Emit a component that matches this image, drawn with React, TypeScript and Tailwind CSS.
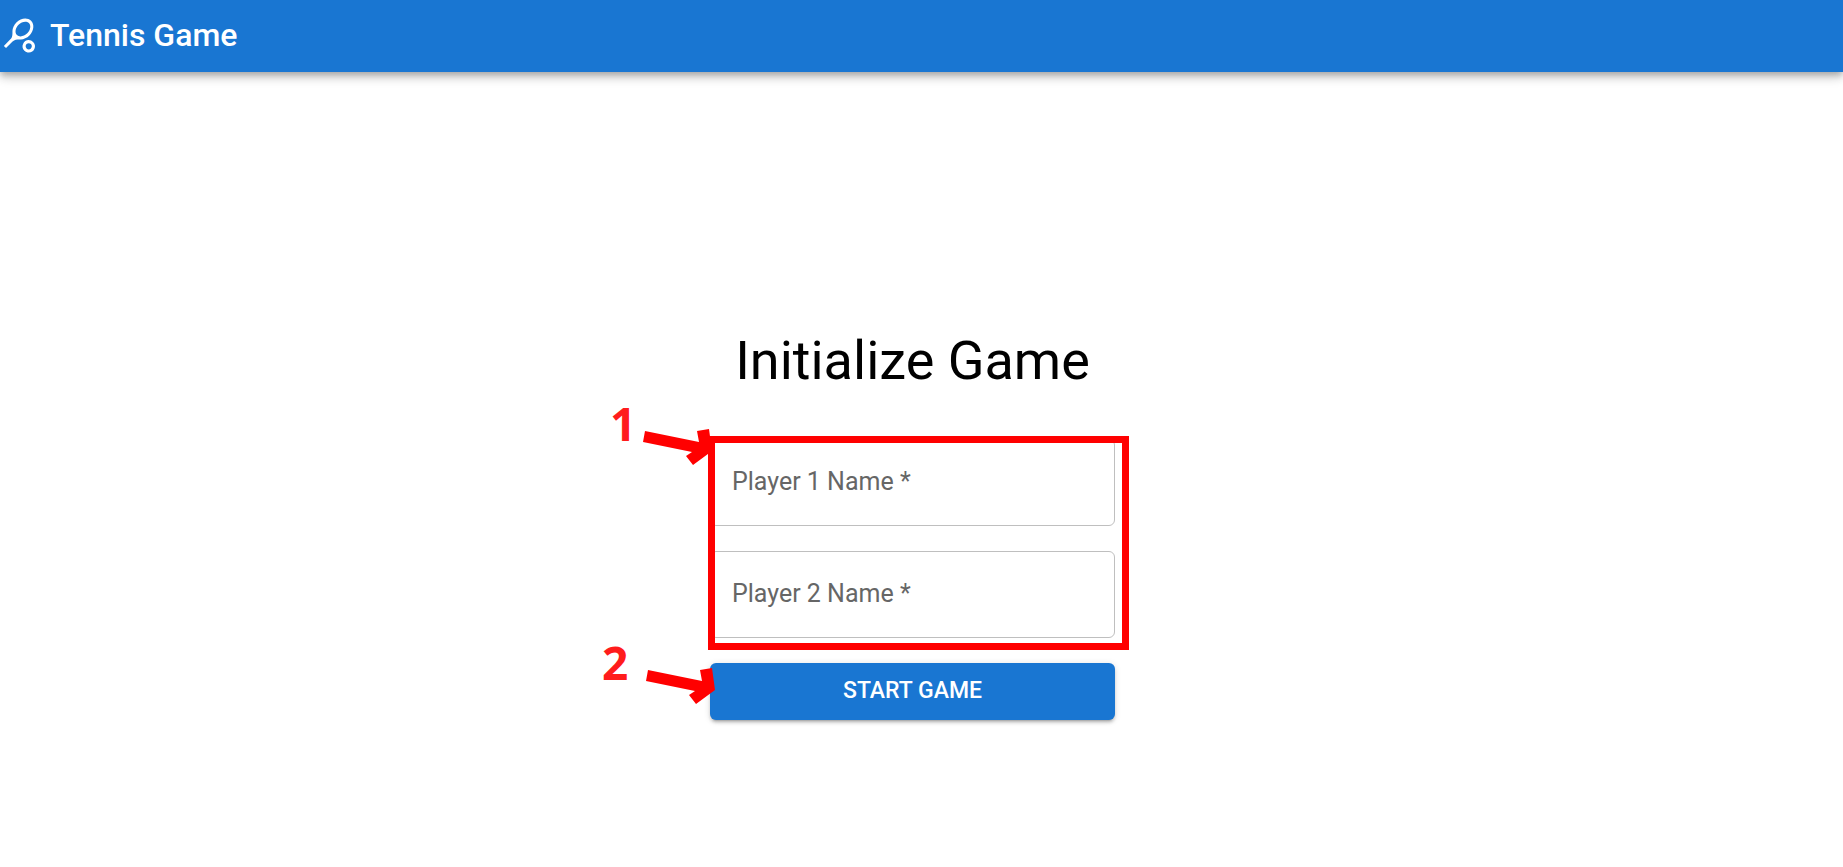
import { MdOutlineSportsTennis } from "react-icons/md";

function Arrow({ className }: { className: string }) {
  return (
    <svg
      className={`pointer-events-none absolute h-10 w-[72px] ${className}`}
      viewBox="0 0 72 40"
      fill="#ff0000"
      aria-hidden="true"
    >
      <polygon points="3,3 57,14 55,3 67,1 70,23 51,37 44,28 50,24 1,14" />
    </svg>
  );
}

function Step({ value, className }: { value: string; className: string }) {
  return (
    <span
      className={`pointer-events-none absolute font-['Open_Sans',sans-serif] text-[46px] leading-none font-bold text-[#ff1c1c] ${className}`}
    >
      {value}
    </span>
  );
}

function PlayerField({ id, label }: { id: string; label: string }) {
  return (
    <div className="relative">
      <input
        id={id}
        type="text"
        required
        className="peer block h-[87px] w-full rounded-md border border-[#bfbfbf] bg-white px-[22px] text-[25px] text-black outline-none focus:border-[#1976d2]"
      />
      <label
        htmlFor={id}
        className="pointer-events-none absolute inset-y-0 left-[22px] flex items-center pb-[2px] text-[25px] leading-9 whitespace-pre text-[#666666] peer-valid:hidden peer-focus:hidden"
      >
        {label} *
      </label>
    </div>
  );
}

export default function App() {
  return (
    <div className="min-h-screen bg-white font-[Roboto,sans-serif] text-black">
      <header className="flex h-[72px] items-center gap-3 bg-[#1976d2] pb-[2px] pl-px text-white shadow-[0_3px_6px_-1px_rgba(0,0,0,0.2),0_6px_8px_0_rgba(0,0,0,0.14),0_2px_15px_0_rgba(0,0,0,0.12)]">
        <MdOutlineSportsTennis className="size-[37px]" aria-hidden="true" />
        <span className="text-[32px] leading-[50px] font-medium">Tennis Game</span>
      </header>

      <main className="flex flex-col items-center pt-64 pr-[18px]">
        <h1 className="text-[54px] leading-[66px]">Initialize Game</h1>

        <form
          className="mt-[45px] flex w-[405px] flex-col gap-[25px]"
          onSubmit={(event) => event.preventDefault()}
        >
          <div className="relative flex flex-col gap-[25px]">
            <PlayerField id="player-one" label="Player 1 Name" />
            <PlayerField id="player-two" label="Player 2 Name" />
            <div className="pointer-events-none absolute -top-[3px] -right-[14px] -bottom-3 -left-[2px] border-[7px] border-[#ff0000]" />
            <Step value="1" className="-top-[39px] -left-[100px]" />
            <Arrow className="-top-[11px] -left-[68px]" />
          </div>

          <div className="relative">
            <button
              type="submit"
              className="block h-[57px] w-full cursor-pointer rounded-md bg-[#1976d2] text-[23px] font-medium text-white uppercase shadow-[0_4px_2px_-3px_rgba(0,0,0,0.2),0_3px_3px_0_rgba(0,0,0,0.14),0_1px_7px_0_rgba(0,0,0,0.12)]"
            >
              Start Game
            </button>
            <Step value="2" className="-top-[24px] -left-[108px]" />
            <Arrow className="top-1 -left-[65px]" />
          </div>
        </form>
      </main>
    </div>
  );
}
